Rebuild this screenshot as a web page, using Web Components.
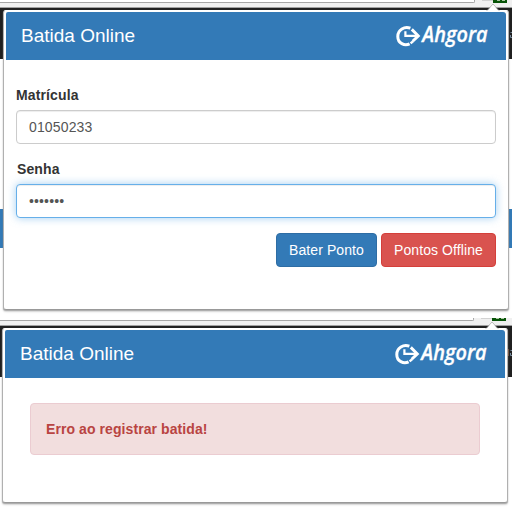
<!DOCTYPE html>
<html lang="pt-BR">
<head>
<meta charset="utf-8">
<title>Batida Online</title>
<style>
html, body { margin: 0; height: 507px; overflow: hidden; background: #fff; }
body { width: 513px; font: 14px/20px "Liberation Sans", Arial, sans-serif; color: #333; }
browser-shot.second { --panel-left: 2px; --head-shift: -1px; }
</style>
</head>
<body>
<browser-shot style="height:318px">
  <popup-panel style="height:300px">
    <form-field label="Matrícula" value="01050233"></form-field>
    <form-field label="Senha" value="•••••••" focused></form-field>
    <action-row>
      <action-button style="width:101px">Bater Ponto</action-button>
      <action-button style="width:115px" kind="danger">Pontos Offline</action-button>
    </action-row>
  </popup-panel>
</browser-shot>
<browser-shot class="second" style="height:189px">
  <popup-panel style="height:175px">
    <alert-box>Erro ao registrar batida!</alert-box>
  </popup-panel>
</browser-shot>

<script>
function define(name, html) {
  const t = document.createElement('template');
  t.innerHTML = html;
  customElements.define(name, class extends HTMLElement {
    constructor() {
      super();
      this.attachShadow({ mode: 'open' }).append(t.content.cloneNode(true));
    }
    connectedCallback() {
      for (const key of ['label', 'value']) {
        const el = this.shadowRoot.querySelector('.' + key);
        if (el) el.textContent = this.getAttribute(key);
      }
    }
  });
}

define('browser-shot', `
<style>
:host { display: grid; width: 512px; overflow: hidden; box-sizing: border-box; }
.back, .front { grid-area: 1 / 1; min-width: 0; min-height: 0; }
.back { display: flex; flex-direction: column; }
.bar { display: flex; height: 7px; flex: none; box-sizing: border-box; background: #f0f0f0; }
.address { width: 475px; height: 3px; box-sizing: border-box; background: #fff; border-bottom: 1px solid #a6a6a6; border-right: 1px solid #a6a6a6; border-radius: 0 0 2px 0; margin-left: var(--head-shift, 0px); }
.ext { margin-left: 7px; width: 11px; height: 1px; background: #d2d2d2; }
.badge { width: 14px; height: 3px; background: #075307; display: flex; gap: 2px; padding-left: 4px; box-sizing: border-box; }
.badge i { width: 3px; height: 1px; background: #a9c6a0; }
.edge { height: 1px; flex: none; background: #a0a0a0; }
.dark { height: 51px; flex: none; background: #202020; display: flex; justify-content: flex-end; }
.fade { width: 4px; height: 51px; overflow: hidden; }
.fade svg { display: block; }
.band { margin-top: 150px; height: 39px; flex: none; background: #337ab7; }
.front { display: flex; align-items: flex-start; padding: 10px 0 0 var(--panel-left, 3px); }
</style>
<div class="back">
  <div class="bar"><span class="address"></span><span class="ext"></span><span class="badge"><i></i><i></i></span></div>
  <div class="edge"></div>
  <div class="dark"><div class="fade"><svg width="4" height="51"><path d="M.5 23v7" stroke="#73503c"/><path d="M2.5 24.5H4M2.5 27v2.5H4" fill="none" stroke="#75899b"/></svg></div></div>
  <div class="band"></div>
</div>
<div class="front"><slot></slot></div>`);

define('popup-panel', `
<style>
:host { display: block; position: relative; width: 506px; box-sizing: border-box; background: #fff; border: 1px solid #b0b0b0; border-top-color: #fff; border-bottom-color: #999; border-radius: 3px; box-shadow: 0 1px 1px #aaa, 0 2px 2px rgba(0,0,0,.15); }
.arrow { position: absolute; left: 482px; top: -8px; display: block; }
header { display: flex; align-items: center; justify-content: space-between; height: 48px; box-sizing: border-box; margin: 1px 2px 0 2px; padding: 0 18px 0 15px; background: #337ab7; color: #fff; border-radius: 2px 3px 0 0; font-size: 19px; line-height: 24px; }
h1 { font: inherit; margin: 0; }
main { padding: 25px 12px 0; }
</style>
<svg class="arrow" width="14" height="9"><path d="M.5 8.5L7 1.2l6.5 7.3z" fill="#fff"/><path d="M.5 8L7 1l6.5 7" fill="none" stroke="#999" stroke-width=".6"/></svg>
<header><h1>Batida Online</h1><brand-logo></brand-logo></header>
<main><slot></slot></main>`);

define('brand-logo', `
<style>:host { display: block; height: 24px; } svg { display: block; overflow: visible; }</style>
<svg width="92" height="24" viewBox="0 0 92 24" fill="none" stroke="#fff">
  <path d="M14.4 4.2C8.5 2 1.8 5.6 1.8 12.4C1.8 19.4 8.6 22.2 13.6 19.8" stroke-width="3"/>
  <path d="M14.6 19.4l2.4-2.1" stroke-width="2.4"/>
  <path d="M9.4 7.2v4.7H22" stroke-width="2.2"/>
  <path d="M15.8 5.4l6.5 6.5-5.6 5.3" stroke-width="2.9"/>
  <text x="26.3" y="18" fill="#fff" stroke="#fff" stroke-width=".3" font-family="Open Sans, sans-serif" font-size="20.8" font-style="italic" font-weight="600" textLength="65.4" lengthAdjust="spacingAndGlyphs">Ahgora</text>
</svg>`);

define('form-field', `
<style>
:host { display: block; margin-bottom: 15px; }
.label { display: block; font-weight: 700; height: 20px; margin-bottom: 5px; letter-spacing: .12px; }
.value { display: block; height: 34px; box-sizing: border-box; padding: 6px 12px; border: 1px solid #ccc; border-radius: 4px; color: #555; background: #fff; box-shadow: inset 0 1px 1px rgba(0,0,0,.075); white-space: pre; letter-spacing: .14px; }
:host([focused]) .label { padding-left: 1px; }
:host([focused]) .value { border-color: #66afe9; box-shadow: inset 0 1px 1px rgba(0,0,0,.075), 0 0 8px rgba(102,175,233,.6); }
</style>
<span class="label"></span><span class="value"></span>`);

define('action-row', `
<style>:host { display: flex; justify-content: flex-end; gap: 4px; }</style><slot></slot>`);

define('action-button', `
<style>
:host { display: block; height: 34px; box-sizing: border-box; padding: 6px 0 6px 12px; border: 1px solid #2e6da4; border-radius: 4px; background: #337ab7; color: #fff; white-space: nowrap; letter-spacing: .09px; }
:host([kind=danger]) { background: #d9534f; border-color: #d43f3a; }
</style><slot></slot>`);

define('alert-box', `
<style>
:host { display: block; height: 52px; box-sizing: border-box; margin: 0 15px; padding: 15px; border: 1px solid #ebccd1; border-radius: 4px; background: #f2dede; color: #b94442; font-weight: 700; letter-spacing: .08px; }
</style><slot></slot>`);
</script>
</body>
</html>
